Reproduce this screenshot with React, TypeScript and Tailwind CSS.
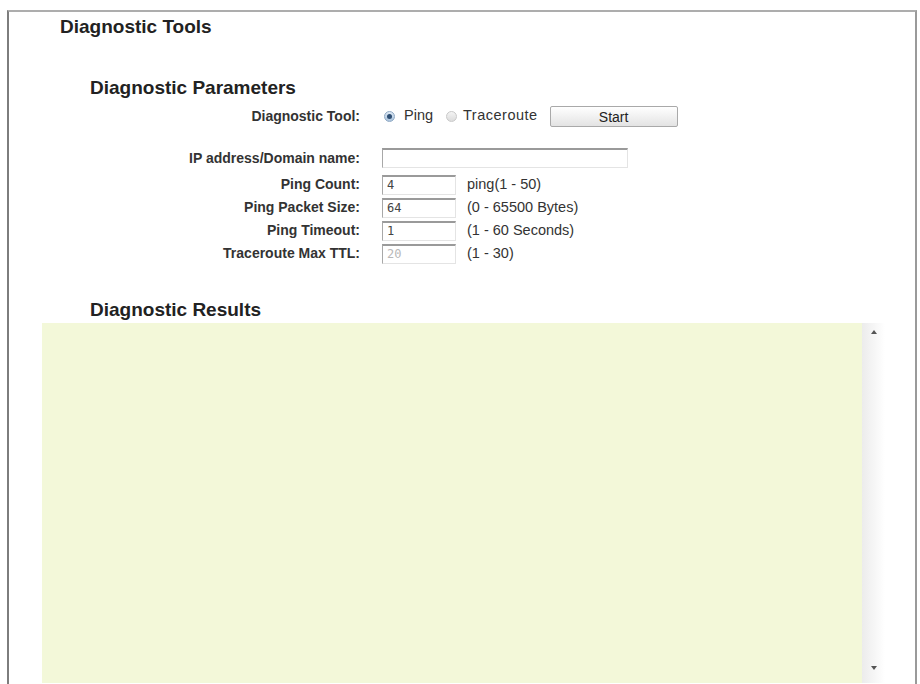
import { useState } from "react";

const FONT = { fontFamily: '"Liberation Sans", Arial, sans-serif' };

interface ParamRow {
  label: string;
  value: string;
  hint: string;
  disabled?: boolean;
}

const PARAMS: ParamRow[] = [
  { label: "Ping Count:", value: "4", hint: "ping(1 - 50)" },
  { label: "Ping Packet Size:", value: "64", hint: "(0 - 65500 Bytes)" },
  { label: "Ping Timeout:", value: "1", hint: "(1 - 60 Seconds)" },
  { label: "Traceroute Max TTL:", value: "20", hint: "(1 - 30)", disabled: true },
];

function Radio({ checked, onClick }: { checked: boolean; onClick: () => void }) {
  return (
    <span
      onClick={onClick}
      className={
        "inline-flex h-[11px] w-[11px] items-center justify-center rounded-full border cursor-pointer " +
        (checked
          ? "border-[#8fa9c4] bg-gradient-to-b from-[#dfeaf5] to-[#a9c2dc]"
          : "border-[#c9c9c9] bg-gradient-to-b from-[#f4f4f4] to-[#dcdcdc]")
      }
    >
      {checked && <span className="h-[5px] w-[5px] rounded-full bg-[#2f4f73]" />}
    </span>
  );
}

function Label({ children }: { children: React.ReactNode }) {
  return (
    <div className="w-[373px] shrink-0 pr-[22px] text-right text-[14px] font-bold text-[#333]">
      {children}
    </div>
  );
}

function Field({ value, width, disabled }: { value: string; width: string; disabled?: boolean }) {
  return (
    <input
      defaultValue={value}
      disabled={disabled}
      className={
        width +
        " h-[20px] border-t-2 border-l border-r border-b border-t-[#9a9a9a] border-l-[#a8a8a8] border-r-[#e4e4e4] border-b-[#e4e4e4] bg-white px-[4px] text-[12px] outline-none " +
        (disabled ? "text-[#b8b8b8]" : "text-[#444]")
      }
      style={{ fontFamily: '"DejaVu Sans Mono", monospace' }}
    />
  );
}

export default function App() {
  const [tool, setTool] = useState<"ping" | "traceroute">("ping");

  return (
    <div className="h-[684px] w-[920px] overflow-hidden bg-white pl-[7px] pt-[10px]" style={FONT}>
      <div className="h-[700px] w-[910px] border-l-2 border-r-2 border-t-2 border-l-[#7d7d7d] border-r-[#9a9a9a] border-t-[#adadad]">
        <h1 className="ml-[51px] mt-[4px] text-[19px] font-bold leading-[22px] text-[#222]">
          Diagnostic Tools
        </h1>

        <h2 className="ml-[81px] mt-[39px] text-[19px] font-bold leading-[22px] text-[#222]">
          Diagnostic Parameters
        </h2>

        <div className="mt-[6px] flex h-[22px] items-center">
          <Label>Diagnostic Tool:</Label>
          <div className="flex items-center text-[14.5px] text-[#333]">
            <span className="ml-[2px] flex">
              <Radio checked={tool === "ping"} onClick={() => setTool("ping")} />
            </span>
            <span className="ml-[9px]">Ping</span>
            <span className="ml-[13px] flex">
              <Radio checked={tool === "traceroute"} onClick={() => setTool("traceroute")} />
            </span>
            <span className="ml-[6px] tracking-[0.5px]">Traceroute</span>
            <button className="ml-[12px] h-[21px] w-[128px] rounded-[2px] border border-[#a9a9a9] bg-gradient-to-b from-white to-[#e3e3e3] text-[14px] text-[#222]">
              Start
            </button>
          </div>
        </div>

        <div className="mt-[20px] flex h-[22px] items-center">
          <Label>IP address/Domain name:</Label>
          <Field value="" width="w-[246px]" />
        </div>

        <div className="mt-[4px]">
          {PARAMS.map((p) => (
            <div key={p.label} className="flex h-[23px] items-center">
              <Label>{p.label}</Label>
              <Field value={p.value} width="w-[74px]" disabled={p.disabled} />
              <span className="ml-[11px] text-[14.5px] text-[#333]">{p.hint}</span>
            </div>
          ))}
        </div>

        <h2 className="ml-[81px] mt-[34px] text-[19px] font-bold leading-[22px] text-[#222]">
          Diagnostic Results
        </h2>

        <div className="ml-[33px] mt-[2px] flex h-[360px] w-[843px]">
          <div className="w-[820px] bg-[#f3f8d9]" />
          <div className="relative w-[23px] bg-gradient-to-r from-[#ececec] to-white">
            <span className="absolute left-[9px] top-[7px] h-0 w-0 border-x-[3px] border-b-[4px] border-x-transparent border-b-[#555]" />
            <span className="absolute left-[9px] top-[343px] h-0 w-0 border-x-[3px] border-t-[4px] border-x-transparent border-t-[#555]" />
          </div>
        </div>
      </div>
    </div>
  );
}
